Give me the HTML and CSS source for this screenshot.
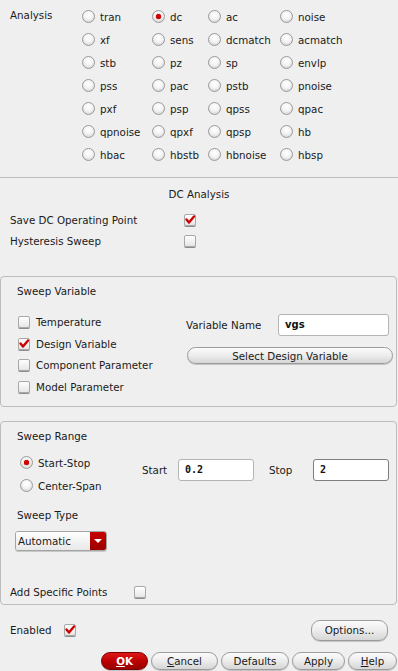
FILE: index.html
```html
<!DOCTYPE html>
<html lang="en">
<head>
    <meta charset="UTF-8">
    <title>Choosing Analyses</title>
    <link rel="stylesheet" href="styles.css">
</head>
<body>
    <div class="form">
        <div class="analysis">
            <div class="analysis-label">Analysis</div>
            <div class="radio-grid">
                <label class="opt"><span class="radio"></span>tran</label>
                <label class="opt"><span class="radio on"></span>dc</label>
                <label class="opt"><span class="radio"></span>ac</label>
                <label class="opt"><span class="radio"></span>noise</label>
                <label class="opt"><span class="radio"></span>xf</label>
                <label class="opt"><span class="radio"></span>sens</label>
                <label class="opt"><span class="radio"></span>dcmatch</label>
                <label class="opt"><span class="radio"></span>acmatch</label>
                <label class="opt"><span class="radio"></span>stb</label>
                <label class="opt"><span class="radio"></span>pz</label>
                <label class="opt"><span class="radio"></span>sp</label>
                <label class="opt"><span class="radio"></span>envlp</label>
                <label class="opt"><span class="radio"></span>pss</label>
                <label class="opt"><span class="radio"></span>pac</label>
                <label class="opt"><span class="radio"></span>pstb</label>
                <label class="opt"><span class="radio"></span>pnoise</label>
                <label class="opt"><span class="radio"></span>pxf</label>
                <label class="opt"><span class="radio"></span>psp</label>
                <label class="opt"><span class="radio"></span>qpss</label>
                <label class="opt"><span class="radio"></span>qpac</label>
                <label class="opt"><span class="radio"></span>qpnoise</label>
                <label class="opt"><span class="radio"></span>qpxf</label>
                <label class="opt"><span class="radio"></span>qpsp</label>
                <label class="opt"><span class="radio"></span>hb</label>
                <label class="opt"><span class="radio"></span>hbac</label>
                <label class="opt"><span class="radio"></span>hbstb</label>
                <label class="opt"><span class="radio"></span>hbnoise</label>
                <label class="opt"><span class="radio"></span>hbsp</label>
            </div>
        </div>

        <div class="dc-section">
            <div class="dc-title">DC Analysis</div>
            <div class="dc-row">
                <span class="dc-label">Save DC Operating Point</span>
                <span class="check on"><svg viewBox="0 0 12 12"><path d="M2.5 5.5 L5 8.5 L10 2.5" /></svg></span>
            </div>
            <div class="dc-row">
                <span class="dc-label">Hysteresis Sweep</span>
                <span class="check"></span>
            </div>
        </div>

        <div class="group sweep-var">
            <div class="group-title">Sweep Variable</div>
            <div class="sv-body">
                <div class="sv-list">
                    <label class="cb-row"><span class="check"></span>Temperature</label>
                    <label class="cb-row"><span class="check on"><svg viewBox="0 0 12 12"><path d="M2.5 5.5 L5 8.5 L10 2.5" /></svg></span>Design Variable</label>
                    <label class="cb-row"><span class="check"></span>Component Parameter</label>
                    <label class="cb-row"><span class="check"></span>Model Parameter</label>
                </div>
                <div class="sv-side">
                    <div class="field-row">
                        <span class="field-label">Variable Name</span>
                        <div class="input bold">vgs</div>
                    </div>
                    <button class="btn wide">Select Design Variable</button>
                </div>
            </div>
        </div>

        <div class="group sweep-range">
            <div class="group-title">Sweep Range</div>
            <div class="sr-body">
                <div class="sr-radios">
                    <label class="opt"><span class="radio on"></span>Start-Stop</label>
                    <label class="opt"><span class="radio"></span>Center-Span</label>
                </div>
                <div class="sr-fields">
                    <span class="start-label">Start</span>
                    <div class="input num">0.2</div>
                    <span class="stop-label">Stop</span>
                    <div class="input num focus">2</div>
                </div>
            </div>
            <div class="group-title sweep-type">Sweep Type</div>
            <div class="combo">
                <span class="combo-text">Automatic</span>
                <span class="combo-arrow"></span>
            </div>
            <div class="add-points">
                <span class="add-label">Add Specific Points</span>
                <span class="check"></span>
            </div>
        </div>

        <div class="enabled-row">
            <span class="enabled-label">Enabled</span>
            <span class="check on"><svg viewBox="0 0 12 12"><path d="M2.5 5.5 L5 8.5 L10 2.5" /></svg></span>
            <button class="btn options">Options...</button>
        </div>

        <div class="actions">
            <button class="btn ok"><u>O</u>K</button>
            <button class="btn cancel"><u>C</u>ancel</button>
            <button class="btn defaults">Defaults</button>
            <button class="btn apply">Apply</button>
            <button class="btn help"><u>H</u>elp</button>
        </div>
    </div>
</body>
</html>
```

FILE: styles.css
```css
/* Base */
html,
body {
    margin: 0;
    background: #efefef;
}

.form {
    font-family: 'DejaVu Sans', 'Liberation Sans', sans-serif;
    font-size: 10.3px;
    color: #1a1a1a;
    width: 398px;
    height: 671px;
    overflow: hidden;
}

label {
    cursor: default;
}

/* Radio and check widgets */
.radio {
    display: inline-block;
    box-sizing: border-box;
    width: 13px;
    height: 13px;
    border-radius: 50%;
    border: 1px solid #9a9a9a;
    background: radial-gradient(circle at 50% 35%, #ffffff 0%, #f4f4f4 45%, #c9c9c9 100%);
    margin-right: 5px;
    position: relative;
    flex: none;
}

.radio.on::after {
    content: '';
    position: absolute;
    left: 3px;
    top: 3px;
    width: 5px;
    height: 5px;
    border-radius: 50%;
    background: #d40000;
    box-shadow: 0 0 1px #900;
}

.check {
    display: inline-block;
    box-sizing: border-box;
    width: 12px;
    height: 12px;
    border: 1px solid #a8a8a8;
    border-radius: 2px;
    background: linear-gradient(#ffffff, #e6e6e6);
    box-shadow: 0 1px 0 #8c8c8c;
    flex: none;
    position: relative;
}

.check svg {
    position: absolute;
    left: -1px;
    top: -1px;
    width: 12px;
    height: 12px;
}

.check path {
    fill: none;
    stroke: #cc0000;
    stroke-width: 2.4;
    stroke-linecap: round;
    stroke-linejoin: round;
}

.opt {
    display: flex;
    align-items: center;
    white-space: nowrap;
}

/* Analysis choice */
.analysis {
    display: flex;
    padding-top: 5px;
    height: 178px;
    box-sizing: border-box;
    border-bottom: 1px solid #bdbdbd;
}

.analysis-label {
    width: 72px;
    padding-left: 10px;
    line-height: 21px;
}

.radio-grid {
    display: grid;
    grid-template-columns: 70px 56px 72px auto;
    grid-auto-rows: 23px;
}

/* DC analysis options */
.dc-section {
    padding-top: 6px;
    height: 98px;
    box-sizing: border-box;
}

.dc-title {
    text-align: center;
    line-height: 20px;
    margin-bottom: 5px;
}

.dc-row {
    display: flex;
    align-items: center;
    height: 21px;
    padding-left: 10px;
}

.dc-label {
    width: 174px;
}

/* Group boxes */
.group {
    border: 1px solid #bcbcbc;
    border-radius: 4px;
    margin-right: 1px;
    box-sizing: border-box;
}

.group-title {
    padding-left: 16px;
    line-height: 20px;
}

.sweep-var {
    height: 131px;
    padding-top: 4px;
}

.sv-body {
    display: flex;
    margin-top: 10px;
}

.sv-list {
    width: 168px;
    padding-left: 17px;
}

.cb-row {
    display: flex;
    align-items: center;
    height: 21.7px;
}

.cb-row .check {
    margin-right: 6px;
}

.sv-side {
    padding-top: 3px;
}

.field-row {
    display: flex;
    align-items: center;
}

.field-label {
    width: 92px;
}

.input {
    box-sizing: border-box;
    height: 22px;
    border: 1px solid #b4b4b4;
    border-radius: 3px;
    background: #fff;
    padding-left: 6px;
    line-height: 20px;
    font-family: 'DejaVu Sans Mono', 'Liberation Mono', monospace;
    font-size: 10px;
    font-weight: bold;
    color: #111;
}

.input.bold {
    width: 111px;
    font-family: 'DejaVu Sans', sans-serif;
}

/* Buttons */
.btn {
    font-family: 'DejaVu Sans', 'Liberation Sans', sans-serif;
    font-size: 10.3px;
    color: #1a1a1a;
    box-sizing: border-box;
    border: 1px solid #9c9c9c;
    border-radius: 9px;
    background: linear-gradient(#fbfbfb, #ececec 50%, #d6d6d6);
    box-shadow: 0 1px 0 #c4c4c4;
    padding: 0;
    cursor: default;
}

.btn.wide {
    display: block;
    width: 206px;
    height: 17px;
    margin-top: 11px;
    margin-left: 1px;
}

/* Sweep range */
.sweep-range {
    margin-top: 14px;
    height: 184px;
    padding-top: 4px;
}

.sr-body {
    display: flex;
    margin-top: 5px;
}

.sr-radios {
    width: 122px;
    padding-left: 19px;
}

.sr-radios .opt {
    height: 23px;
}

.sr-fields {
    display: flex;
    align-items: center;
    height: 22px;
    margin-top: 8px;
}

.start-label {
    width: 36px;
}

.sr-fields .input {
    width: 76px;
}

.stop-label {
    margin-left: 15px;
    width: 44px;
}

.input.focus {
    border-color: #7e7e7e;
}

.sweep-type {
    margin-top: 8px;
}

.combo {
    display: flex;
    margin: 6px 0 0 14px;
    width: 92px;
    height: 20px;
    box-sizing: border-box;
    border: 1px solid #a4a4a4;
    border-radius: 3px;
    overflow: hidden;
    box-shadow: 0 1px 0 #c8c8c8;
}

.combo-text {
    flex: 1;
    background: linear-gradient(#ffffff, #e8e8e8);
    line-height: 18px;
    padding-left: 2px;
}

.combo-arrow {
    width: 16px;
    background: linear-gradient(#c80000, #9c0000);
    position: relative;
}

.combo-arrow::after {
    content: '';
    position: absolute;
    left: 4px;
    top: 7px;
    border-left: 4px solid transparent;
    border-right: 4px solid transparent;
    border-top: 4px solid #fff;
}

.add-points {
    display: flex;
    align-items: center;
    margin-top: 31px;
    padding-left: 9px;
    height: 20px;
}

.add-label {
    width: 124px;
}

/* Footer */
.enabled-row {
    display: flex;
    align-items: center;
    height: 22px;
    margin-top: 14px;
    padding-left: 10px;
}

.enabled-label {
    width: 54px;
}

.btn.options {
    margin-left: auto;
    margin-right: 10px;
    width: 77px;
    height: 21px;
}

.actions {
    display: flex;
    justify-content: flex-end;
    gap: 3px;
    margin-top: 11px;
    padding-right: 1px;
}

.actions .btn {
    height: 18px;
}

.btn.ok {
    width: 47px;
    background: linear-gradient(#e01818, #b80000 55%, #980000);
    border-color: #7a0000;
    color: #fff;
    font-weight: bold;
}

.btn.cancel {
    width: 67px;
}

.btn.defaults {
    width: 68px;
}

.btn.apply {
    width: 53px;
}

.btn.help {
    width: 49px;
}
```
